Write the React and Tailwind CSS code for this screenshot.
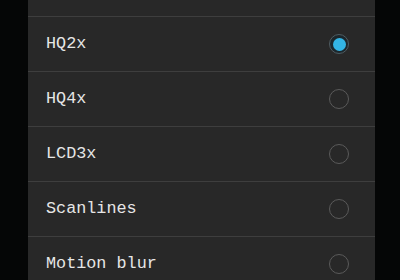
const options = [
  { label: 'HQ2x', checked: true },
  { label: 'HQ4x' },
  { label: 'LCD3x' },
  { label: 'Scanlines' },
  { label: 'Motion blur' },
];

const Radio = ({ checked }) =>
  checked ? (
    <div className="w-[20px] h-[20px] rounded-full border-[1.5px] border-[#4f5c62] flex items-center justify-center bg-[#1c272c]">
      <div className="w-[13px] h-[13px] rounded-full bg-[#33b5e5]" />
    </div>
  ) : (
    <div className="w-[20px] h-[20px] rounded-full border-[1.5px] border-[#5a5a5a]" />
  );

export default function App() {
  return (
    <div className="w-[400px] h-[280px] overflow-hidden bg-[#050606] flex">
      <div className="ml-[28px] w-[347px] h-full bg-[#282828] flex flex-col" style={{ fontFamily: '"Liberation Mono", monospace' }}>
        <div className="h-[16px] shrink-0" />
        {options.map((item) => (
          <div key={item.label} className="h-[55px] shrink-0 border-t-[1.5px] border-[#3e3e3e] flex items-center justify-between pl-[18px] pr-[26px]">
            <span className="text-[16.8px] text-[#e6e6e6]">{item.label}</span>
            <Radio checked={item.checked} />
          </div>
        ))}
      </div>
    </div>
  );
}
